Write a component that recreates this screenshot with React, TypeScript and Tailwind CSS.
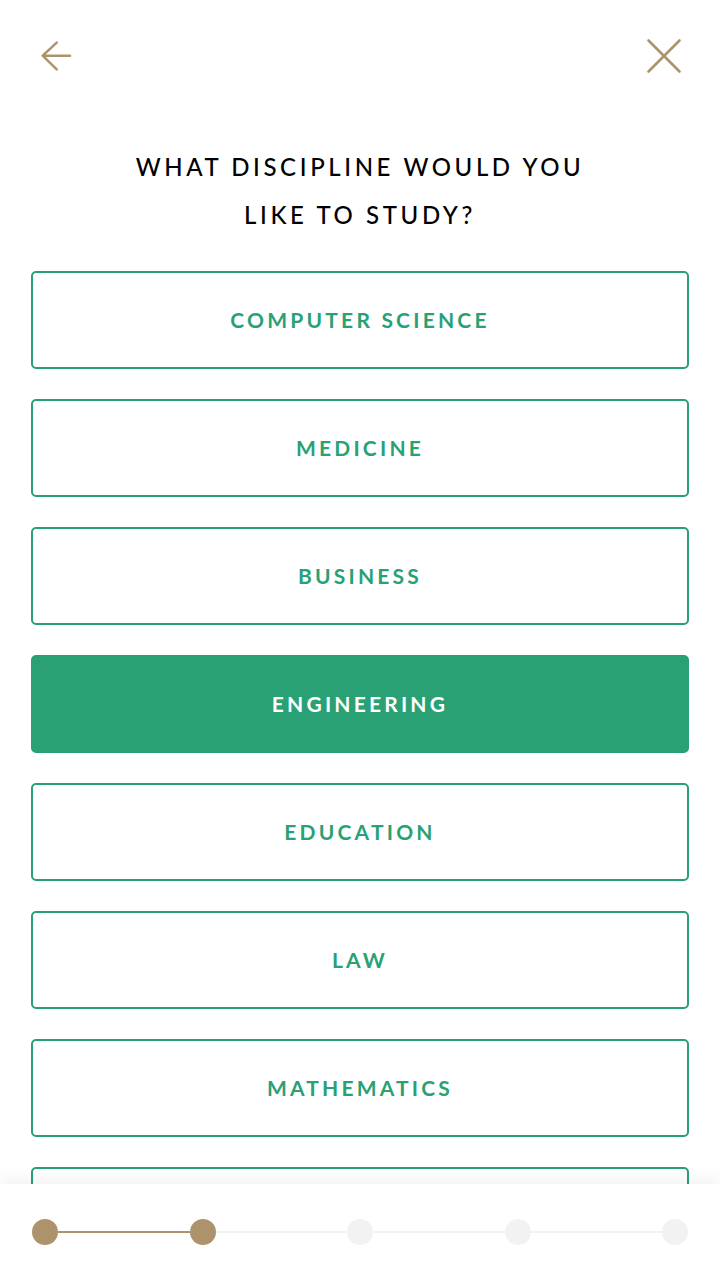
import React from 'react'

const disciplines = [
  'Computer Science',
  'Medicine',
  'Business',
  'Engineering',
  'Education',
  'Law',
  'Mathematics',
  'Psychology',
]

const selected = 'Engineering'

function BackIcon() {
  return (
    <svg width="36" height="36" viewBox="0 0 36 36" fill="none" stroke="#ad936b" strokeWidth="2.5" strokeLinecap="round" strokeLinejoin="round">
      <path d="M18.7 4.7 L4.7 17.7 L18.7 31.3 M4.7 17.7 H32" />
    </svg>
  )
}

function CloseIcon() {
  return (
    <svg width="36" height="36" viewBox="0 0 36 36" fill="none" stroke="#ad936b" strokeWidth="2.6" strokeLinecap="round">
      <path d="M2.5 2.5 L33.5 33.5 M33.5 2.5 L2.5 33.5" />
    </svg>
  )
}

function Progress({ step, total }: { step: number; total: number }) {
  const items = []
  for (let i = 0; i < total; i++) {
    const done = i < step
    if (i > 0) {
      items.push(
        <div key={'l' + i} className={'flex-1 h-[2px] ' + (done ? 'bg-[#ad936b]' : 'bg-[#f2f2f2]')} />
      )
    }
    items.push(
      <div key={'d' + i} className={'w-[26px] h-[26px] rounded-full shrink-0 ' + (done ? 'bg-[#ad936b]' : 'bg-[#f2f2f2]')} />
    )
  }
  return <div className="flex items-center px-[32px] h-[96px]">{items}</div>
}

export default function App() {
  return (
    <div className="w-[720px] h-[1280px] flex flex-col bg-white overflow-hidden" style={{ fontFamily: 'Lato, "Open Sans", sans-serif' }}>
      <div className="flex-1 overflow-hidden">
        <div className="flex items-center justify-between h-[112px] px-[38px]">
          <BackIcon />
          <CloseIcon />
        </div>
        <h1 className="pt-[31px] mb-[32px] text-center text-[24px] leading-[48px] tracking-[3.6px] font-medium text-black uppercase">
          What discipline would you
          <br />
          like to study?
        </h1>
        <div className="flex flex-col gap-[30px] px-[31px]">
          {disciplines.map((d) => {
            const active = d === selected
            return (
              <button
                key={d}
                className={
                  'h-[98px] w-full rounded-[5px] border-2 border-[#29a174] uppercase text-[21px] font-bold tracking-[3.2px] ' +
                  (active ? 'bg-[#29a174] text-white' : 'bg-white text-[#29a174]')
                }
              >
                {d}
              </button>
            )
          })}
        </div>
      </div>
      <div className="relative z-10 bg-white shadow-[0_-6px_14px_rgba(0,0,0,0.05)]">
        <Progress step={2} total={5} />
      </div>
    </div>
  )
}
